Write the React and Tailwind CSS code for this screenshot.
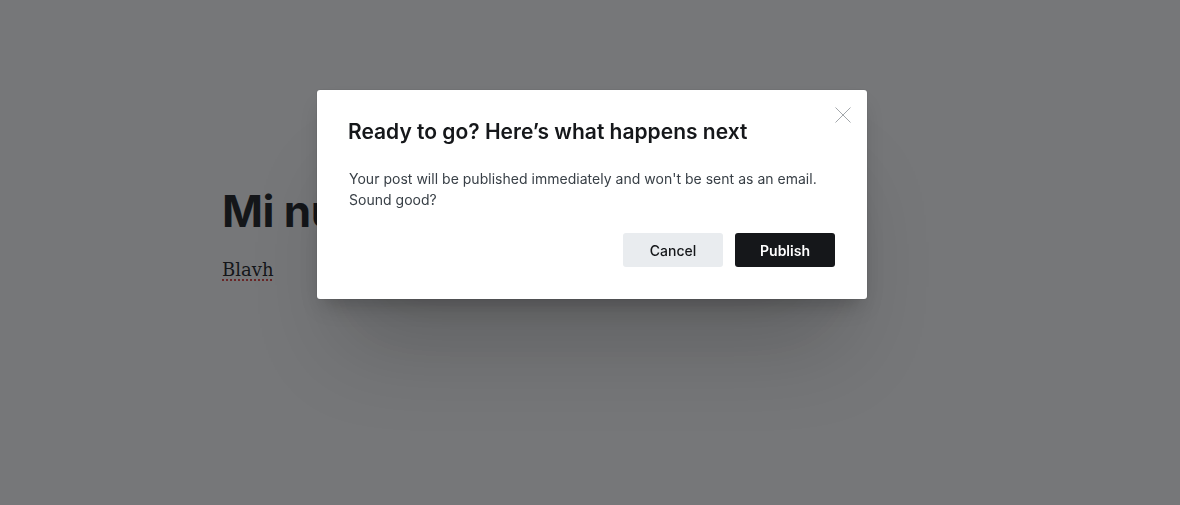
export default function App() {
  return (
    <div className="relative min-h-[505px] bg-white font-['Inter',sans-serif]">
      {/* editor behind the modal */}
      <div className="mx-auto w-[740px] pt-[187px] pl-[2px]">
        <h1 className="text-[44px] leading-[48px] font-bold tracking-[-0.5px] text-[#15171a]">
          Mi nuevo post
        </h1>
        <p className="mt-[19px] font-['DejaVu_Serif',serif] text-[18px] leading-[32px] text-[#15171a]">
          <span className="underline decoration-dotted decoration-[#e0403a] decoration-2 underline-offset-[3px]">Blavh</span>
        </p>
      </div>

      {/* modal */}
      <div className="fixed inset-0 flex items-start justify-center bg-[rgba(21,23,26,0.585)] pt-[90px] pl-[4px]">
        <div className="relative w-[550px] rounded-[3px] bg-white pl-[31px] pr-8 pt-7 pb-8 shadow-[0_0_0_1px_rgba(0,0,0,0.04),0_12px_20px_-6px_rgba(0,0,0,0.22),0_70px_90px_-25px_rgba(0,0,0,0.2)]">
          <button className="absolute top-[17px] right-[16px] text-[#a3a7ab]">
            <svg width="16" height="16" viewBox="0 0 16 16" fill="none" stroke="currentColor" strokeWidth="1">
              <path d="M0.5 0.5L15.5 15.5M15.5 0.5L0.5 15.5" />
            </svg>
          </button>
          <h2 className="text-[21px] leading-[28px] font-semibold text-[#15171a]">
            Ready to go? Here’s what happens next
          </h2>
          <p className="mt-[22px] pl-px text-[14px] leading-[21px] tracking-[0.02px] text-[#394047]">
            Your post will be published immediately and won't be sent as an email.
            <br />
            Sound good?
          </p>
          <div className="mt-[23px] flex justify-end gap-3">
            <button className="h-[34px] w-[100px] rounded-[3px] bg-[#e9ecef] text-[14px] font-medium text-[#15171a]">
              Cancel
            </button>
            <button className="h-[34px] w-[100px] rounded-[3px] bg-[#15171a] text-[14px] font-semibold text-white">
              Publish
            </button>
          </div>
        </div>
      </div>
    </div>
  );
}
